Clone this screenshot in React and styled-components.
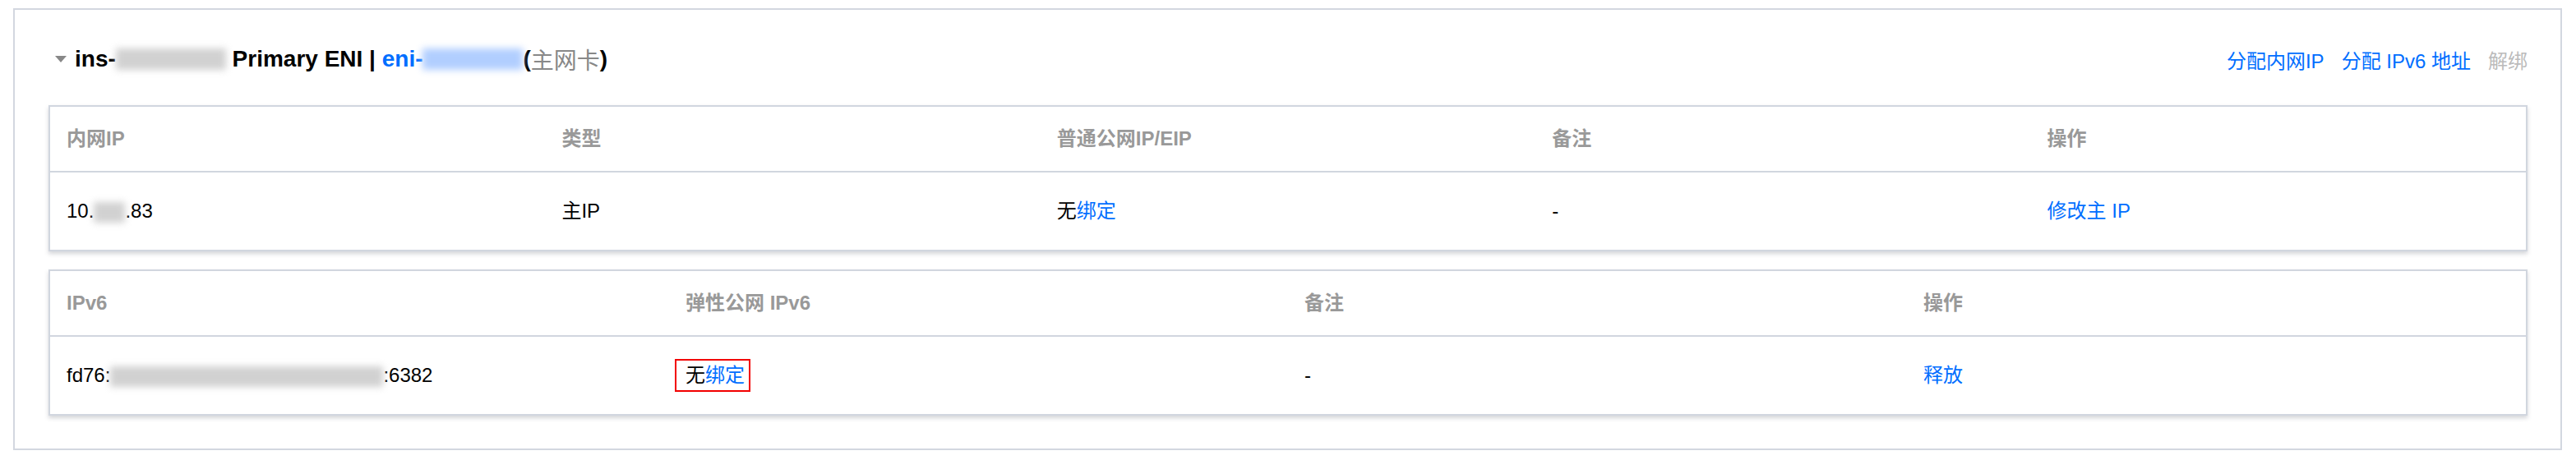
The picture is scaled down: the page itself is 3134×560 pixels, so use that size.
import React from "react";
import styled, { createGlobalStyle } from "styled-components";

const GlobalStyle = createGlobalStyle`
    body {
        margin: 0;
        background: #fff;
        font-family: "Liberation Sans", "Noto Sans CJK SC", sans-serif;
        color: #000;
    }
`

const Page = styled.div`
    padding: 10px 17px 12px 16px;
`

const Panel = styled.div`
    border: 2px solid #d3d7e0;
    padding: 0 40px 40px 41px;
`

const Header = styled.div`
    display: flex;
    align-items: center;
    justify-content: space-between;
    height: 116px;
    padding-top: 4px;
    box-sizing: border-box;
`

const Title = styled.div`
    display: flex;
    align-items: center;
    font-size: 28px;
    font-weight: bold;
    white-space: pre;
`

const Caret = styled.span`
    width: 0;
    height: 0;
    margin: 0 10px 0 8px;
    border-left: 7px solid transparent;
    border-right: 7px solid transparent;
    border-top: 8px solid #888;
`

const Blur = styled.span`
    display: inline-block;
    vertical-align: -6px;
    width: ${p => p.$w}px;
    height: ${p => p.$h || 26}px;
    background: ${p => p.$blue ? "#a9c9ff" : "#c2c2c2"};
    filter: blur(4px);
    opacity: ${p => p.$blue ? 0.9 : 0.75};
`

const Blue = styled.span`
    color: #006eff;
`

const Muted = styled.span`
    color: #888;
    font-weight: normal;
`

const Actions = styled.div`
    display: flex;
    gap: 21px;
    font-size: 24px;
`

const Link = styled.a`
    color: ${p => p.disabled ? "#bbb" : "#006eff"};
    cursor: ${p => p.disabled ? "not-allowed" : "pointer"};
    text-decoration: none;
`

const Table = styled.div`
    border: 2px solid #d1d6df;
    box-shadow: 0 3px 5px rgba(60, 64, 80, 0.22);
    & + & {
        margin-top: 22px;
    }
`

const Row = styled.div`
    display: grid;
    grid-template-columns: repeat(${p => p.$cols}, 1fr);
    align-items: center;
    height: ${p => p.$head ? 78 : 94}px;
    border-bottom: ${p => p.$head ? "2px solid #d1d6df" : "none"};
    font-size: 24px;
    line-height: 30px;
    color: ${p => p.$head ? "#999" : "#000"};
    font-weight: ${p => p.$head ? "bold" : "normal"};
`

const Cell = styled.div`
    padding-left: 20px;
    white-space: pre;
`

const Marked = styled.span`
    display: inline-block;
    border: 2px solid #f20000;
    padding: 3px 5px 3px 11px;
    margin-left: -13px;
`

export default function App() {
    return (
        <Page>
            <GlobalStyle />
            <Panel>
                <Header>
                    <Title>
                        <Caret />
                        ins-<Blur $w={134} /> Primary ENI | <Blue>eni-</Blue><Blur $w={122} $blue />(<Muted>主网卡</Muted>)
                    </Title>
                    <Actions>
                        <Link>分配内网IP</Link>
                        <Link>分配 IPv6 地址</Link>
                        <Link disabled>解绑</Link>
                    </Actions>
                </Header>

                <Table>
                    <Row $cols={5} $head>
                        <Cell>内网IP</Cell>
                        <Cell>类型</Cell>
                        <Cell>普通公网IP/EIP</Cell>
                        <Cell>备注</Cell>
                        <Cell>操作</Cell>
                    </Row>
                    <Row $cols={5}>
                        <Cell>10.<Blur $w={38} $h={25} />.83</Cell>
                        <Cell>主IP</Cell>
                        <Cell>无<Blue>绑定</Blue></Cell>
                        <Cell>-</Cell>
                        <Cell><Blue>修改主 IP</Blue></Cell>
                    </Row>
                </Table>

                <Table>
                    <Row $cols={4} $head>
                        <Cell>IPv6</Cell>
                        <Cell>弹性公网 IPv6</Cell>
                        <Cell>备注</Cell>
                        <Cell>操作</Cell>
                    </Row>
                    <Row $cols={4}>
                        <Cell>fd76:<Blur $w={332} $h={25} />:6382</Cell>
                        <Cell><Marked>无<Blue>绑定</Blue></Marked></Cell>
                        <Cell>-</Cell>
                        <Cell><Blue>释放</Blue></Cell>
                    </Row>
                </Table>
            </Panel>
        </Page>
    )
}
